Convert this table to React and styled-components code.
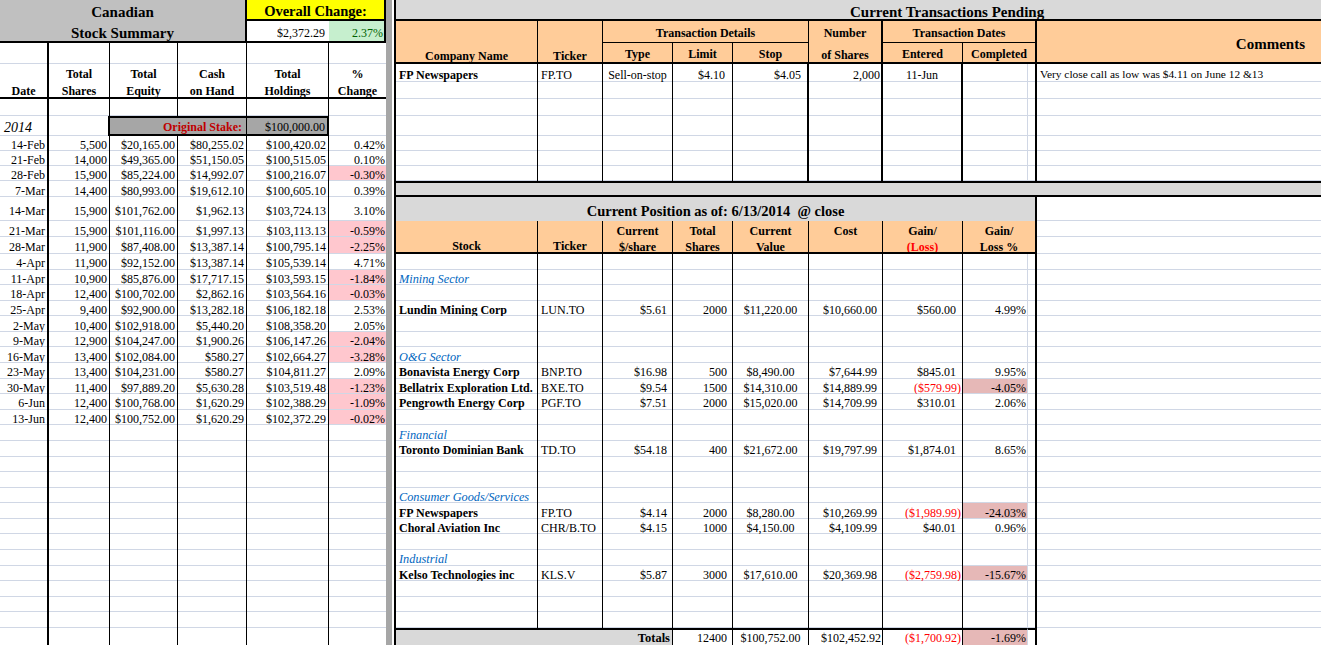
import React, { Fragment } from "react";
import styled, { createGlobalStyle } from "styled-components";

const GRID = "#d0d7e5";
const LINE = "1px solid #000";
const HEAVY = "2px solid #000";
const HAIR = `1px solid ${GRID}`;

const ORANGE = "#ffcc99";
const BAND = "#d9d9d9";

// one row height list shared by both panes so the gridlines line up
const ROWS = [21, 22, 21, 18, 17, 17, 20, 15, 15, 15, 16, 24, 16, 17, ...Array(24).fill(15.58), 18];
const rowTemplate = ROWS.map((h) => `${h}px`).join(" ");

const GlobalStyle = createGlobalStyle`
  html, body { margin: 0; padding: 0; background: #fff; }
  body { overflow: hidden; }
`;

const Sheet = styled.div`
  display: flex;
  width: 1321px;
  height: 645px;
  overflow: hidden;
  background: #fff;
  font-family: "Liberation Serif", "Times New Roman", serif;
  font-size: 12px;
  line-height: 1;
  color: #000;
`;

const Pane = styled.div`
  display: grid;
  grid-template-columns: ${(p) => p.$cols};
  grid-template-rows: ${rowTemplate};
  flex: ${(p) => (p.$grow ? "1 1 auto" : "none")};
  width: ${(p) => p.$width || "auto"};
  border-left: ${(p) => (p.$grow ? HEAVY : "none")};
  height: 645px;
  overflow: hidden;
`;

const Splitter = styled.div`
  flex: none;
  width: 8px;
  height: 645px;
  background: linear-gradient(to right, #a6a6a6 6px, #fff 6px);
`;

const justify = { left: "flex-start", right: "flex-end", center: "center" };

const Cell = styled.div`
  grid-column: ${(p) => (typeof p.$span === "string" ? p.$span : `span ${p.$span || 1}`)};
  grid-row: span ${(p) => p.$rows || 1};
  display: flex;
  align-items: ${(p) => p.$v || "center"};
  justify-content: ${(p) => justify[p.$align || "left"]};
  box-sizing: border-box;
  min-width: 0;
  padding: ${(p) => p.$padT ?? 3}px ${(p) => p.$padR ?? 3}px ${(p) => p.$padB ?? 0}px
    ${(p) => p.$padL ?? 3}px;
  overflow: hidden;
  white-space: nowrap;
  background: ${(p) => p.$bg || "transparent"};
  color: ${(p) => p.$color || "inherit"};
  font-weight: ${(p) => (p.$bold ? 700 : 400)};
  font-style: ${(p) => (p.$italic ? "italic" : "normal")};
  font-size: ${(p) => (p.$size ? `${p.$size}px` : "inherit")};
  border-right: ${(p) => p.$edge || "none"};
  border-top: ${(p) => p.$top || "none"};
  border-bottom: ${(p) => p.$bottom || "none"};
  box-shadow: ${(p) => (p.$bottom || p.$nogrid ? "none" : `inset 0 -1px 0 ${GRID}`)};
`;

const Lines = styled.div`
  display: flex;
  flex-direction: column;
  align-self: stretch;
  width: 100%;
`;

const Line = styled.span`
  height: ${(p) => p.$h}px;
  flex: none;
  display: flex;
  align-items: center;
  justify-content: center;
  color: ${(p) => p.$color || "inherit"};
`;

/* ---------- left: weekly summary ---------- */

const LEFT_COLS = "49px 61px 68px 69px 82px 57px";
const leftEdges = [HEAVY, LINE, LINE, LINE, LINE, "none"];

const weekly = [
  ["14-Feb", "5,500", "$20,165.00", "$80,255.02", "$100,420.02", "0.42%"],
  ["21-Feb", "14,000", "$49,365.00", "$51,150.05", "$100,515.05", "0.10%"],
  ["28-Feb", "15,900", "$85,224.00", "$14,992.07", "$100,216.07", "-0.30%"],
  ["7-Mar", "14,400", "$80,993.00", "$19,612.10", "$100,605.10", "0.39%"],
  ["14-Mar", "15,900", "$101,762.00", "$1,962.13", "$103,724.13", "3.10%"],
  ["21-Mar", "15,900", "$101,116.00", "$1,997.13", "$103,113.13", "-0.59%"],
  ["28-Mar", "11,900", "$87,408.00", "$13,387.14", "$100,795.14", "-2.25%"],
  ["4-Apr", "11,900", "$92,152.00", "$13,387.14", "$105,539.14", "4.71%"],
  ["11-Apr", "10,900", "$85,876.00", "$17,717.15", "$103,593.15", "-1.84%"],
  ["18-Apr", "12,400", "$100,702.00", "$2,862.16", "$103,564.16", "-0.03%"],
  ["25-Apr", "9,400", "$92,900.00", "$13,282.18", "$106,182.18", "2.53%"],
  ["2-May", "10,400", "$102,918.00", "$5,440.20", "$108,358.20", "2.05%"],
  ["9-May", "12,900", "$104,247.00", "$1,900.26", "$106,147.26", "-2.04%"],
  ["16-May", "13,400", "$102,084.00", "$580.27", "$102,664.27", "-3.28%"],
  ["23-May", "13,400", "$104,231.00", "$580.27", "$104,811.27", "2.09%"],
  ["30-May", "11,400", "$97,889.20", "$5,630.28", "$103,519.48", "-1.23%"],
  ["6-Jun", "12,400", "$100,768.00", "$1,620.29", "$102,388.29", "-1.09%"],
  ["13-Jun", "12,400", "$100,752.00", "$1,620.29", "$102,372.29", "-0.02%"],
];

const leftHeads = [
  ["", "Date"],
  ["Total", "Shares"],
  ["Total", "Equity"],
  ["Cash", "on Hand"],
  ["Total", "Holdings"],
  ["%", "Change"],
];

const BlankRow = ({ edges }) =>
  edges.map((edge, i) => <Cell key={i} $edge={edge} />);

const SummaryPane = () => {
  const filler = 32 - weekly.length;
  return (
    <Pane $width="386px" $cols={LEFT_COLS}>
      <Cell $span={4} $rows={2} $bg="#c0c0c0" $edge={HEAVY} $bottom={HEAVY} $bold $size={15} $padT={1} $padL={0} $padR={0}>
        <Lines>
          <Line $h={22}>Canadian</Line>
          <Line $h={20}>Stock Summary</Line>
        </Lines>
      </Cell>
      <Cell $span={2} $bg="#ffff00" $edge={HEAVY} $bottom={HEAVY} $bold $size={14.5} $align="center" $v="flex-end" $padB={1}>
        Overall Change:
      </Cell>
      <Cell $bottom={HEAVY} $align="right" $padR={4}>$2,372.29</Cell>
      <Cell $bottom={HEAVY} $edge={HEAVY} $bg="#c6efce" $color="#006100" $align="right" $padR={1}>2.37%</Cell>

      <BlankRow edges={leftEdges} />

      {leftHeads.map(([a, b], i) => (
        <Cell key={i} $rows={2} $edge={leftEdges[i]} $bottom={HEAVY} $bold $padT={1} $padL={0} $padR={0}>
          <Lines>
            <Line $h={17}>{a}</Line>
            <Line $h={17}>{b}</Line>
          </Lines>
        </Cell>
      ))}

      <BlankRow edges={leftEdges} />

      <Cell $edge={HEAVY} $italic $size={14} $padL={4}>2014</Cell>
      <Cell $edge={HEAVY} />
      <Cell $span={2} $bg="#a6a6a6" $top={HEAVY} $bottom={HEAVY} $edge={LINE} $bold $color="#c00000" $align="right" $padT={1} $padR={4}>
        Original Stake:
      </Cell>
      <Cell $bg="#a6a6a6" $top={HEAVY} $bottom={HEAVY} $edge={HEAVY} $align="right" $padT={1} $padR={2}>
        $100,000.00
      </Cell>
      <Cell />

      {weekly.map((row) => {
        const down = row[5].startsWith("-");
        return (
          <Fragment key={row[0]}>
            {row.map((v, i) => (
              <Cell
                key={i}
                $edge={leftEdges[i]}
                $align="right"
                $padR={i === 5 ? 1 : 2}
                $bg={i === 5 && down ? "#ffc7ce" : undefined}
              >
                {v}
              </Cell>
            ))}
          </Fragment>
        );
      })}

      {Array.from({ length: filler }, (_, r) => (
        <BlankRow key={r} edges={leftEdges} />
      ))}
    </Pane>
  );
};

/* ---------- right: pending transactions + current position ---------- */

const RIGHT_COLS = "142px 65px 70px 60px 76px 74px 80px 65px 9px 1fr";
const upperEdges = [LINE, LINE, LINE, LINE, HEAVY, HEAVY, HEAVY, HAIR, HEAVY, "none"];
const lowerEdges = [LINE, LINE, LINE, LINE, LINE, LINE, LINE, HAIR, HEAVY, "none"];

const positions = [
  null,
  { sector: "Mining Sector" },
  null,
  { name: "Lundin Mining Corp", ticker: "LUN.TO", price: "$5.61", shares: "2000", value: "$11,220.00", cost: "$10,660.00", gain: "$560.00", pct: "4.99%" },
  null,
  null,
  { sector: "O&G Sector" },
  { name: "Bonavista Energy Corp", ticker: "BNP.TO", price: "$16.98", shares: "500", value: "$8,490.00", cost: "$7,644.99", gain: "$845.01", pct: "9.95%" },
  { name: "Bellatrix Exploration Ltd.", ticker: "BXE.TO", price: "$9.54", shares: "1500", value: "$14,310.00", cost: "$14,889.99", gain: "($579.99)", pct: "-4.05%", loss: true },
  { name: "Pengrowth Energy Corp", ticker: "PGF.TO", price: "$7.51", shares: "2000", value: "$15,020.00", cost: "$14,709.99", gain: "$310.01", pct: "2.06%" },
  null,
  { sector: "Financial" },
  { name: "Toronto Dominian Bank", ticker: "TD.TO", price: "$54.18", shares: "400", value: "$21,672.00", cost: "$19,797.99", gain: "$1,874.01", pct: "8.65%" },
  null,
  null,
  { sector: "Consumer Goods/Services" },
  { name: "FP Newspapers", ticker: "FP.TO", price: "$4.14", shares: "2000", value: "$8,280.00", cost: "$10,269.99", gain: "($1,989.99)", pct: "-24.03%", loss: true },
  { name: "Choral Aviation Inc", ticker: "CHR/B.TO", price: "$4.15", shares: "1000", value: "$4,150.00", cost: "$4,109.99", gain: "$40.01", pct: "0.96%" },
  null,
  { sector: "Industrial" },
  { name: "Kelso Technologies inc", ticker: "KLS.V", price: "$5.87", shares: "3000", value: "$17,610.00", cost: "$20,369.98", gain: "($2,759.98)", pct: "-15.67%", loss: true },
  null,
  null,
  null,
];

const PositionRow = ({ p }) => {
  if (!p) return <BlankRow edges={lowerEdges} />;
  if (p.sector) {
    return (
      <>
        <Cell $edge={LINE} $italic $color="#0066c0" $size={12.3}>{p.sector}</Cell>
        {lowerEdges.slice(1).map((edge, i) => <Cell key={i} $edge={edge} />)}
      </>
    );
  }
  return (
    <>
      <Cell $edge={LINE} $bold>{p.name}</Cell>
      <Cell $edge={LINE}>{p.ticker}</Cell>
      <Cell $edge={LINE} $align="right" $padR={5}>{p.price}</Cell>
      <Cell $edge={LINE} $align="right" $padR={5}>{p.shares}</Cell>
      <Cell $edge={LINE} $align="center">{p.value}</Cell>
      <Cell $edge={LINE} $align="right" $padR={5}>{p.cost}</Cell>
      <Cell $edge={LINE} $align="right" $padR={p.loss ? 1 : 6} $color={p.loss ? "#ff0000" : undefined}>{p.gain}</Cell>
      <Cell $edge={HAIR} $align="right" $padR={1} $bg={p.loss ? "#e6b8b7" : undefined}>{p.pct}</Cell>
      <Cell $edge={HEAVY} />
      <Cell />
    </>
  );
};

const HeadCell = ({ top, bottom, edge, topColor, bottomColor, span, tall = [16, 15], shift = 2 }) => (
  <Cell $rows={2} $span={span} $edge={edge} $bottom={HEAVY} $bg={ORANGE} $bold $padT={shift} $padL={0} $padR={0}>
    <Lines>
      <Line $h={tall[0]} $color={topColor}>{top}</Line>
      <Line $h={tall[1]} $color={bottomColor}>{bottom}</Line>
    </Lines>
  </Cell>
);

const PositionsPane = () => (
  <Pane $grow $cols={RIGHT_COLS}>
    {/* pending transactions */}
    <Cell $span="1 / -1" $bg={BAND} $bottom={HEAVY} $bold $size={15} $padT={6} $padL={454}>
      Current Transactions Pending
    </Cell>

    <Cell $rows={2} $edge={LINE} $bottom={HEAVY} $bg={ORANGE} $bold $align="center" $v="flex-end">Company Name</Cell>
    <Cell $rows={2} $edge={LINE} $bottom={HEAVY} $bg={ORANGE} $bold $align="center" $v="flex-end">Ticker</Cell>
    <Cell $span={3} $edge={LINE} $bottom={LINE} $bg={ORANGE} $bold $align="center">Transaction Details</Cell>
    <HeadCell top="Number" bottom="of Shares" edge={HEAVY} tall={[22, 21]} shift={1} />
    <Cell $span={3} $edge={HEAVY} $bottom={LINE} $bg={ORANGE} $bold $align="center">Transaction Dates</Cell>
    <Cell $rows={2} $bottom={HEAVY} $bg={ORANGE} $bold $size={15} $align="right" $padT={6} $padR={16}>Comments</Cell>
    <Cell $edge={LINE} $bottom={HEAVY} $bg={ORANGE} $bold $align="center">Type</Cell>
    <Cell $edge={LINE} $bottom={HEAVY} $bg={ORANGE} $bold $align="center">Limit</Cell>
    <Cell $edge={LINE} $bottom={HEAVY} $bg={ORANGE} $bold $align="center">Stop</Cell>
    <Cell $edge={LINE} $bottom={HEAVY} $bg={ORANGE} $bold $align="center">Entered</Cell>
    <Cell $span={2} $edge={HEAVY} $bottom={HEAVY} $bg={ORANGE} $bold $align="center">Completed</Cell>

    <Cell $edge={upperEdges[0]} $bold>FP Newspapers</Cell>
    <Cell $edge={upperEdges[1]}>FP.TO</Cell>
    <Cell $edge={upperEdges[2]} $align="center">Sell-on-stop</Cell>
    <Cell $edge={upperEdges[3]} $align="right" $padR={7}>$4.10</Cell>
    <Cell $edge={upperEdges[4]} $align="right" $padR={6}>$4.05</Cell>
    <Cell $edge={upperEdges[5]} $align="right" $padR={1}>2,000</Cell>
    <Cell $edge={upperEdges[6]} $align="center">11-Jun</Cell>
    <Cell $edge={upperEdges[7]} />
    <Cell $edge={upperEdges[8]} />
    <Cell $size={11.4}>Very close call as low was $4.11 on June 12 &amp;13</Cell>

    {Array.from({ length: 6 }, (_, r) => (
      <BlankRow key={r} edges={upperEdges} />
    ))}

    <Cell $span="1 / -1" $bg={BAND} $top={HEAVY} $bottom={HEAVY} />

    {/* current position */}
    <Cell $span={9} $bg={BAND} $edge={HEAVY} $nogrid $bold $size={14.5} $align="center" $v="flex-end" $padB={3}>
      Current Position as of: 6/13/2014&nbsp; @ close
    </Cell>
    <Cell />

    <Cell $rows={2} $edge={LINE} $bottom={HEAVY} $bg={ORANGE} $bold $align="center" $v="flex-end">Stock</Cell>
    <Cell $rows={2} $edge={LINE} $bottom={HEAVY} $bg={ORANGE} $bold $align="center" $v="flex-end">Ticker</Cell>
    <HeadCell top="Current" bottom="$/share" edge={LINE} />
    <HeadCell top="Total" bottom="Shares" edge={LINE} />
    <HeadCell top="Current" bottom="Value" edge={LINE} />
    <HeadCell top="Cost" bottom="" edge={LINE} />
    <HeadCell top="Gain/" bottom="(Loss)" bottomColor="#ff0000" edge={LINE} />
    <HeadCell top="Gain/" bottom="Loss %" span={2} edge={HEAVY} />
    <Cell />
    <Cell />

    {positions.map((p, i) => (
      <PositionRow key={i} p={p} />
    ))}

    <Cell $span={3} $edge={LINE} $top={HEAVY} $bg={BAND} $nogrid $bold $align="right" $padT={0} $padR={2} $size={12.5}>Totals</Cell>
    <Cell $edge={LINE} $top={HEAVY} $nogrid $align="right" $padT={0} $padR={5}>12400</Cell>
    <Cell $edge={LINE} $top={HEAVY} $nogrid $align="center" $padT={0}>$100,752.00</Cell>
    <Cell $edge={LINE} $top={HEAVY} $nogrid $align="right" $padT={0} $padR={1}>$102,452.92</Cell>
    <Cell $edge={LINE} $top={HEAVY} $nogrid $align="right" $padT={0} $padR={1} $color="#ff0000">($1,700.92)</Cell>
    <Cell $edge={HAIR} $top={HEAVY} $nogrid $align="right" $padT={0} $padR={1} $bg="#e6b8b7">-1.69%</Cell>
    <Cell $edge={HEAVY} $top={HEAVY} $nogrid />
    <Cell $nogrid />
  </Pane>
);

export default function App() {
  return (
    <>
      <GlobalStyle />
      <Sheet>
        <SummaryPane />
        <Splitter />
        <PositionsPane />
      </Sheet>
    </>
  );
}
